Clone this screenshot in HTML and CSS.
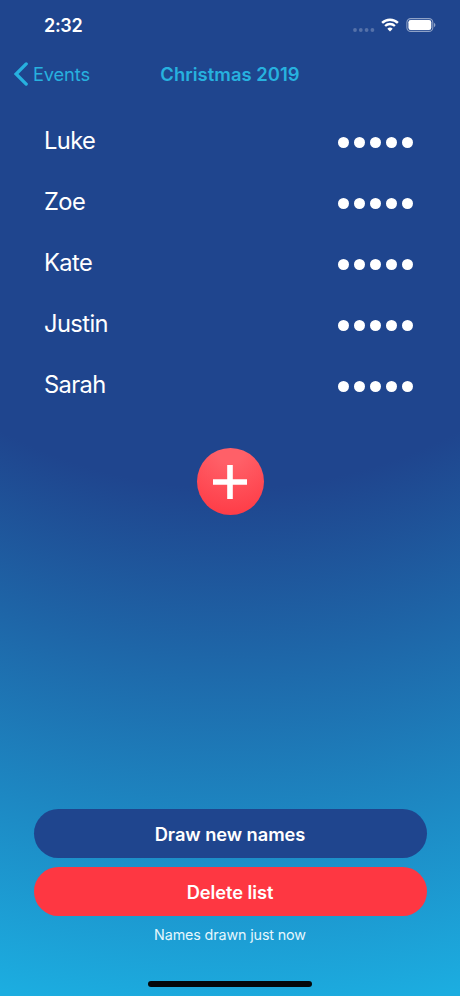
FILE: index.html
```html
<!DOCTYPE html>
<html lang="en">
<head>
  <meta charset="UTF-8">
  <title>Christmas 2019</title>
  <link rel="stylesheet" href="styles.css">
</head>
<body>
  <div class="screen">
    <div class="status-bar">
      <span class="time">2:32</span>
      <div class="status-icons">
        <svg class="signal" width="22" height="4" viewBox="0 0 22 4">
          <circle cx="2" cy="2" r="1.9"/>
          <circle cx="7.8" cy="2" r="1.9"/>
          <circle cx="13.6" cy="2" r="1.9"/>
          <circle cx="19.4" cy="2" r="1.9"/>
        </svg>
        <svg class="wifi" width="18" height="14" viewBox="0 0 18 14">
          <path d="M1.1 4.9a11.3 11.3 0 0 1 15.8 0" fill="none" stroke="#fff" stroke-width="2.5"/>
          <path d="M4.1 8a7 7 0 0 1 9.8 0" fill="none" stroke="#fff" stroke-width="2.3"/>
          <path d="M9 13.4L6.3 10.7a3.9 3.9 0 0 1 5.4 0z" fill="#fff"/>
        </svg>
        <svg class="battery" width="30" height="14" viewBox="0 0 30 14">
          <rect x="0.9" y="0.6" width="25.9" height="12.8" rx="3.9" fill="none" stroke="#8fa2c7" stroke-width="1.1"/>
          <rect x="2.4" y="2.1" width="22.9" height="9.8" rx="2.2" fill="#fff"/>
          <path d="M28 4.8c1.9.8 1.9 3.6 0 4.4z" fill="#8fa2c7"/>
        </svg>
      </div>
    </div>

    <div class="nav-bar">
      <a class="back">
        <svg width="14" height="24" viewBox="0 0 14 24">
          <path d="M12.2 1.9L2.1 12l10.1 10.1" fill="none" stroke="#27b1df" stroke-width="3.3" stroke-linecap="round" stroke-linejoin="miter"/>
        </svg>
        <span>Events</span>
      </a>
      <h1 class="title">Christmas 2019</h1>
    </div>

    <ul class="names">
      <li><span>Luke</span><i class="dots"><b></b><b></b><b></b><b></b><b></b></i></li>
      <li><span>Zoe</span><i class="dots"><b></b><b></b><b></b><b></b><b></b></i></li>
      <li><span>Kate</span><i class="dots"><b></b><b></b><b></b><b></b><b></b></i></li>
      <li><span>Justin</span><i class="dots"><b></b><b></b><b></b><b></b><b></b></i></li>
      <li><span>Sarah</span><i class="dots"><b></b><b></b><b></b><b></b><b></b></i></li>
    </ul>

    <button class="add">
      <svg width="34" height="34" viewBox="0 0 34 34">
        <path d="M17 0v34M0 17h34" stroke="#fff" stroke-width="5.6"/>
      </svg>
    </button>

    <div class="actions">
      <button class="btn draw">Draw new names</button>
      <button class="btn delete">Delete list</button>
      <p class="note">Names drawn just now</p>
    </div>

    <div class="home-indicator"></div>
  </div>
</body>
</html>
```
FILE: styles.css
```css
body, html {
  margin: 0;
  padding: 0;
}

body {
  font-family: Inter, "Liberation Sans", sans-serif;
  color: #fff;
}

button {
  border: 0;
  padding: 0;
  color: #fff;
  font-family: inherit;
}

.screen {
  box-sizing: border-box;
  width: 460px;
  height: 996px;
  display: flex;
  flex-direction: column;
  overflow: hidden;
  background: radial-gradient(circle 996px at 230px 0, #1f458e 49%, #1cade0 102%);
}

.status-bar {
  height: 50px;
  padding: 0 24px 0 44px;
  display: flex;
  justify-content: space-between;
  align-items: center;
}

.time {
  font-size: 18px;
  font-weight: 600;
  letter-spacing: -0.3px;
}

.status-icons {
  display: flex;
  align-items: center;
}

.signal {
  fill: #5571a9;
  margin: 9px 6px 0 0;
}

.wifi {
  margin-right: 7px;
}

.nav-bar {
  height: 47px;
  padding: 0 14px;
  display: grid;
  grid-template-columns: 1fr auto 1fr;
  align-items: center;
  color: #27b1df;
}

.back {
  display: flex;
  align-items: center;
  gap: 5px;
  font-size: 18.3px;
  letter-spacing: -0.15px;
}

.title {
  margin: 0;
  font-size: 18.4px;
  font-weight: 600;
  letter-spacing: 0.05px;
}

.names {
  list-style: none;
  margin: 13px 0 0;
  padding: 0 47.5px 0 44px;
}

.names li {
  height: 61px;
  display: flex;
  justify-content: space-between;
  align-items: center;
  font-size: 23.7px;
  letter-spacing: -0.6px;
}

.dots {
  display: flex;
  gap: 4.8px;
  padding-top: 3px;
}

.dots b {
  width: 11px;
  height: 11px;
  border-radius: 50%;
  background: #fff;
}

.add {
  width: 67px;
  height: 67px;
  margin: 33px auto 0;
  display: flex;
  flex-shrink: 0;
  justify-content: center;
  align-items: center;
  border-radius: 50%;
  background: radial-gradient(circle at 50% 0, #ff6068 20%, #fe3742 100%);
}

.actions {
  margin-top: auto;
  padding: 0 33.5px;
}

.btn {
  display: block;
  width: 100%;
  height: 49px;
  border-radius: 25px;
  font-size: 18.3px;
  font-weight: 600;
  letter-spacing: -0.06px;
}

.draw {
  background: #1f458e;
}

.delete {
  margin-top: 9px;
  background: #fe3742;
}

.note {
  margin: 10px 0 0;
  font-size: 14.3px;
  line-height: 18px;
  letter-spacing: -0.12px;
  text-align: center;
  color: #e6f7fd;
}

.home-indicator {
  width: 164px;
  height: 6px;
  margin: 37px auto 9px;
  border-radius: 3px;
  background: #04070a;
}
```
